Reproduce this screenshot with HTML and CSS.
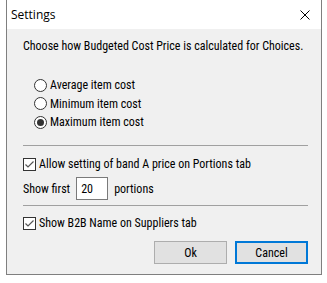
FILE: index.html
```html
<!DOCTYPE html>
<html lang="en">

<head>
  <meta charset="UTF-8" />
  <title>Settings</title>
  <link rel="stylesheet" href="styles.css">
</head>

<body>
  <section class="dialog">
    <div class="titlebar">
      <span class="title">Settings</span>
      <svg class="close" width="10" height="10" viewBox="0 0 10 10">
        <path d="M0.5 0.5 L9.5 9.5 M9.5 0.5 L0.5 9.5" stroke="#000" stroke-width="1" fill="none" />
      </svg>
    </div>

    <div class="content">
      <p class="intro">Choose how Budgeted Cost Price is calculated for Choices.</p>

      <div class="radios">
        <label class="option"><span class="radio"></span>Average item cost</label>
        <label class="option"><span class="radio"></span>Minimum item cost</label>
        <label class="option"><span class="radio checked"></span>Maximum item cost</label>
      </div>

      <hr class="sep" />

      <label class="option check-row">
        <span class="check">
          <svg width="11" height="11" viewBox="0 0 11 11">
            <path d="M1.5 5.5 L4 8 L9.5 2.5" stroke="#555" stroke-width="1.2" fill="none" />
          </svg>
        </span>Allow setting of band A price on Portions tab
      </label>

      <div class="show-row">
        <span>Show first</span>
        <span class="num">20</span>
        <span>portions</span>
      </div>

      <hr class="sep" />

      <label class="option check-row last">
        <span class="check">
          <svg width="11" height="11" viewBox="0 0 11 11">
            <path d="M1.5 5.5 L4 8 L9.5 2.5" stroke="#555" stroke-width="1.2" fill="none" />
          </svg>
        </span>Show B2B Name on Suppliers tab
      </label>

      <div class="buttons">
        <button class="btn">Ok</button>
        <button class="btn default">Cancel</button>
      </div>
    </div>
  </section>
</body>

</html>
```

FILE: styles.css
```css
:root {
  --frame: #7f7f7f;
  --face: #f0f0f0;
  --text: #000000;
  --btn: #e1e1e1;
  --btn-border: #adadad;
  --blue: #0078d7;
}

body {
  margin: 0;
  background: #ffffff;
  font-family: "Roboto Condensed", "Liberation Sans", sans-serif;
  font-size: 12px;
  color: var(--text);
}

.dialog {
  margin-left: 6px;
  width: 314px;
  height: 274px;
  border: 1px solid var(--frame);
  border-top: none;
  background: var(--face);
  display: flex;
  flex-direction: column;
}

.titlebar {
  flex-shrink: 0;
  height: 29px;
  background: #ffffff;
  display: flex;
  align-items: center;
  justify-content: space-between;
  padding: 0 11px 0 4px;
}

.title {
  font-family: "Open Sans", "Noto Sans", sans-serif;
  font-size: 12px;
}

.content {
  padding: 10px 13px 0 16px;
}

.intro {
  margin: 0 0 25px 0;
  line-height: 14px;
}

.radios {
  display: flex;
  flex-direction: column;
  gap: 4.5px;
  padding-left: 11px;
}

.option {
  display: flex;
  align-items: center;
  height: 14px;
  line-height: 14px;
}

.radio {
  width: 11px;
  height: 11px;
  border: 1px solid #333333;
  border-radius: 50%;
  background: #ffffff;
  margin-right: 3px;
  display: flex;
  align-items: center;
  justify-content: center;
}

.radio.checked::after {
  content: "";
  width: 7px;
  height: 7px;
  border-radius: 50%;
  background: #333333;
}

.sep {
  border: none;
  border-top: 1px solid #a0a0a0;
  margin: 16px 0 0 0;
  height: 0;
}

.check-row {
  margin-top: 11px;
}

.check-row.last {
  margin-top: 10px;
}

.check {
  width: 11px;
  height: 11px;
  border: 1px solid #333333;
  background: #ffffff;
  margin-right: 3px;
  display: flex;
}

.show-row {
  display: flex;
  align-items: center;
  gap: 6px;
  margin-top: 6px;
}

.num {
  width: 26px;
  height: 21px;
  border: 1px solid #7a7a7a;
  background: #ffffff;
  padding-left: 4px;
  display: flex;
  align-items: center;
}

.show-row + .sep {
  margin-top: 5px;
}

.buttons {
  display: flex;
  justify-content: flex-end;
  gap: 8px;
  margin-top: 11px;
}

.btn {
  width: 73px;
  height: 23px;
  background: var(--btn);
  border: 1px solid var(--btn-border);
  font-family: "Roboto Condensed", "Liberation Sans", sans-serif;
  font-size: 12px;
  padding: 0;
}

.btn.default {
  border: 2px solid var(--blue);
}
```
